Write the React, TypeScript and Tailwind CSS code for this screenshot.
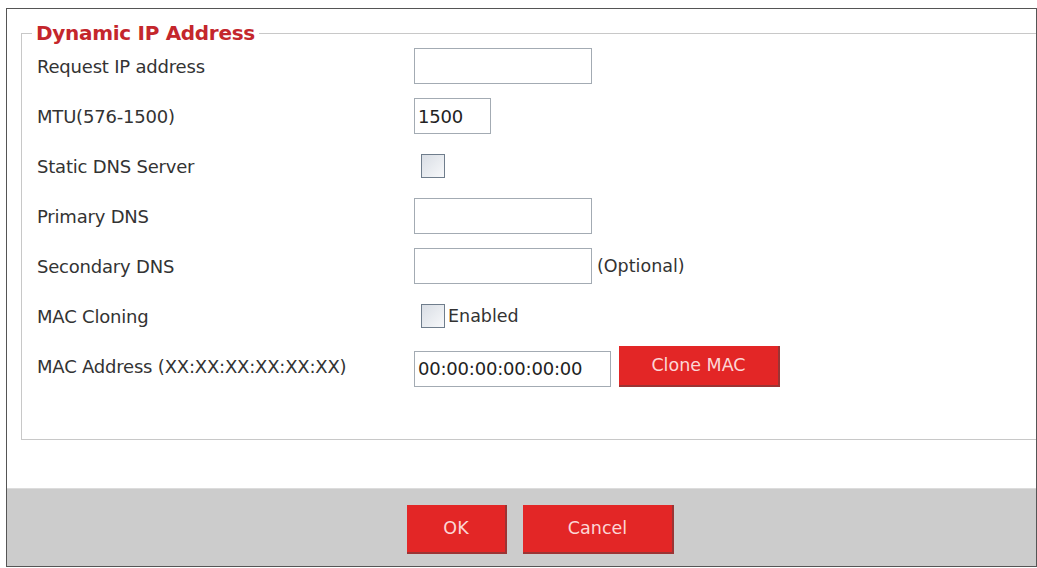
import React from "react";

const labelFont = "font-['DejaVu_Sans',sans-serif]";

function TextBox({ value = "", width }: { value?: string; width: string }) {
  return (
    <div
      className={`${width} h-[36px] border border-[#a3abb3] bg-white flex items-center px-[3px] text-[18px] text-[#222] tracking-[-0.2px]`}
    >
      {value}
    </div>
  );
}

function CheckBox() {
  return (
    <div className="w-[24px] h-[24px] border border-[#6f7d8c] bg-gradient-to-br from-[#d9dee5] to-[#f7f8fa]" />
  );
}

function RedButton({ label, className }: { label: string; className: string }) {
  return (
    <button
      className={`${className} bg-[#e32626] border-r-2 border-b-2 border-[#9b3434] text-[#fcd6d6] text-[17.5px] flex items-center justify-center`}
    >
      {label}
    </button>
  );
}

export default function App() {
  const rows: { label: string; field: React.ReactNode }[] = [
    { label: "Request IP address", field: <TextBox width="w-[178px]" /> },
    { label: "MTU(576-1500)", field: <TextBox width="w-[77px]" value="1500" /> },
    {
      label: "Static DNS Server",
      field: (
        <div className="pl-[7px]">
          <CheckBox />
        </div>
      ),
    },
    { label: "Primary DNS", field: <TextBox width="w-[178px]" /> },
    {
      label: "Secondary DNS",
      field: (
        <div className="flex items-center gap-[5px]">
          <TextBox width="w-[178px]" />
          <span className="text-[#333] text-[17.5px]">(Optional)</span>
        </div>
      ),
    },
    {
      label: "MAC Cloning",
      field: (
        <div className="flex items-center pl-[7px] gap-[3px]">
          <CheckBox />
          <span className="text-[#333] text-[17.5px]">Enabled</span>
        </div>
      ),
    },
    {
      label: "MAC Address (XX:XX:XX:XX:XX:XX)",
      field: (
        <div className="flex items-end gap-[8px] h-[41px]">
          <TextBox width="w-[197px]" value="00:00:00:00:00:00" />
          <RedButton label="Clone MAC" className="w-[161px] h-[41px]" />
        </div>
      ),
    },
  ];

  return (
    <div className={`w-[1037px] h-[568px] bg-white pt-[8px] pl-[6px] ${labelFont}`}>
      <div className="w-[1031px] h-[559px] border border-[#555] flex flex-col">
        <div className="pt-[16px] pl-[14px]">
          <fieldset className="border border-r-0 border-[#c8c8c8] pl-[15px] pb-[48px]">
            <legend className="-ml-[5px] px-[4px] leading-[16px] text-[20px] font-bold text-[#c4262c] tracking-[-0.3px]">
              Dynamic IP Address
            </legend>
            <div className="flex flex-col">
              {rows.map((r) => (
                <div key={r.label} className="flex items-center h-[50px]">
                  <div className="w-[377px] text-[18px] text-[#333] tracking-[-0.2px]">{r.label}</div>
                  {r.field}
                </div>
              ))}
            </div>
          </fieldset>
        </div>
        <div className="mt-auto h-[78px] bg-[#cccccc] border-t border-[#dcdcdc] pt-[16px] pl-[400px] flex gap-[16px] items-start">
          <RedButton label="OK" className="w-[100px] h-[49px]" />
          <RedButton label="Cancel" className="w-[151px] h-[49px]" />
        </div>
      </div>
    </div>
  );
}
